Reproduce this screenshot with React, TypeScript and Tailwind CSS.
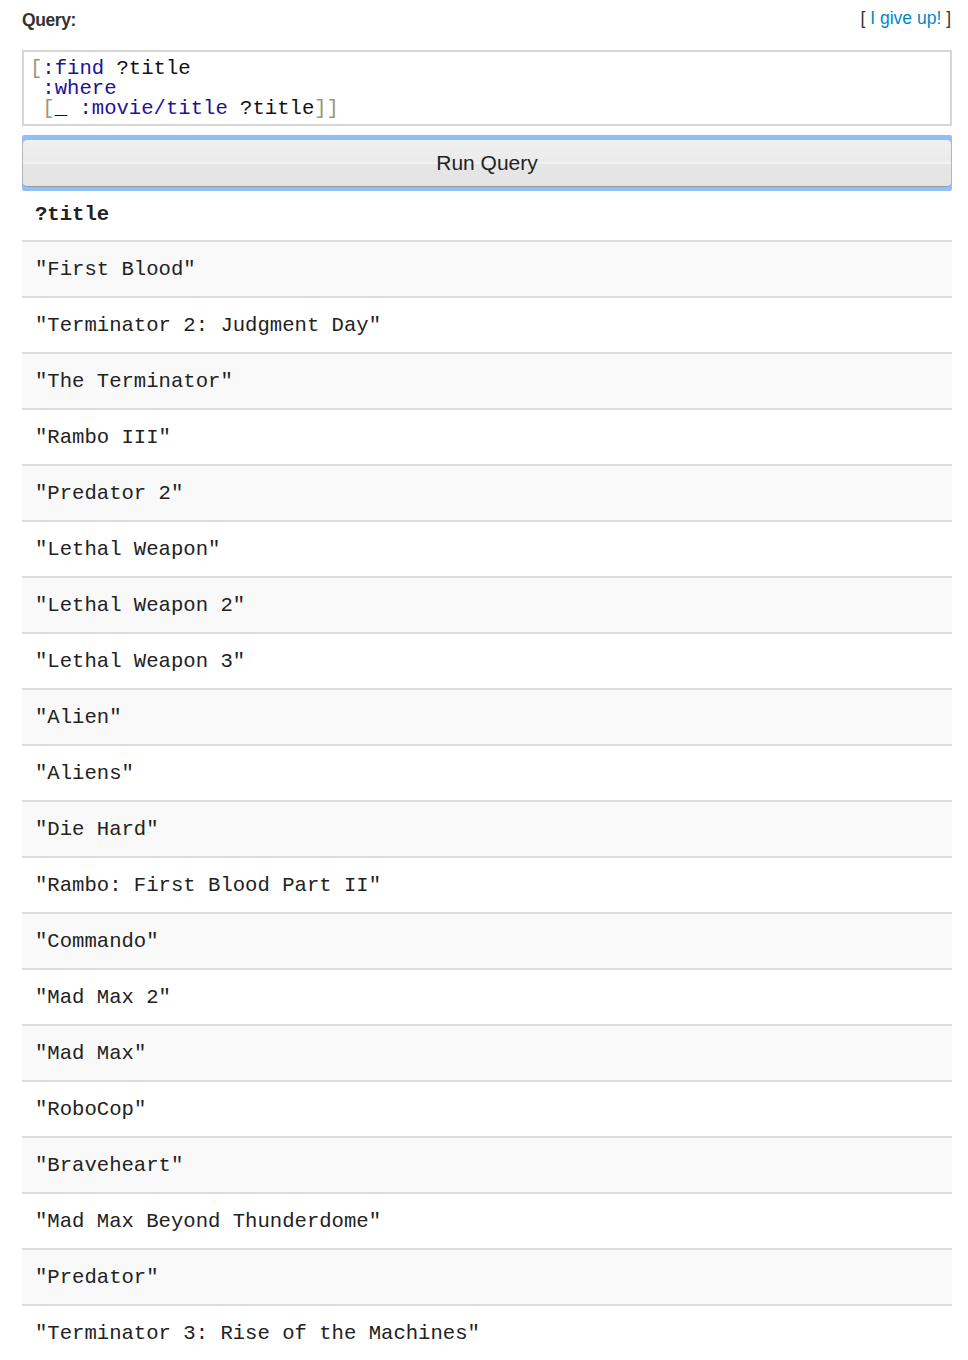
import React from "react";

const titles = [
  "First Blood",
  "Terminator 2: Judgment Day",
  "The Terminator",
  "Rambo III",
  "Predator 2",
  "Lethal Weapon",
  "Lethal Weapon 2",
  "Lethal Weapon 3",
  "Alien",
  "Aliens",
  "Die Hard",
  "Rambo: First Blood Part II",
  "Commando",
  "Mad Max 2",
  "Mad Max",
  "RoboCop",
  "Braveheart",
  "Mad Max Beyond Thunderdome",
  "Predator",
  "Terminator 3: Rise of the Machines",
];

const mono = { fontFamily: '"Liberation Mono", "Courier New", monospace' };

export default function App() {
  return (
    <div
      className="bg-white text-[#333] min-h-[1360px] pl-[22px] pr-[16px]"
      style={{ fontFamily: '"Liberation Sans", Arial, sans-serif' }}
    >
      <div className="flex items-center justify-between h-[40px]">
        <span className="font-bold text-[17.5px] tracking-[-0.4px]">Query:</span>
        <span className="text-[17.5px] pr-[1px] -mt-[3px]">
          [ <a className="text-[#0088cc]">I give up!</a> ]
        </span>
      </div>

      {/* editor */}
      <div className="mt-[10px] h-[76px] border-2 border-[#d6d6d6] pl-[6px] pt-[7px]">
        <pre className="text-[20.6px] leading-[20px] m-0 text-[#111]" style={mono}>
          <span className="text-[#997]">[</span>
          <span className="text-[#221199]">:find</span> ?title
          {"\n "}
          <span className="text-[#221199]">:where</span>
          {"\n "}
          <span className="text-[#997]">[</span>_ <span className="text-[#221199]">:movie/title</span> ?title
          <span className="text-[#997]">]]</span>
        </pre>
      </div>

      {/* button */}
      <div className="mt-[9px] bg-[#8fc0f7] py-[4px] rounded-[2px]">
        <button className="w-full h-[48px] rounded-[5px] border border-[#b5b5b5] border-b-[#9a9a9a] bg-[linear-gradient(#f0f0f0_0%,#ebebeb_48%,#fdfdfd_50%,#e6e6e6_52%,#e4e4e4_100%)] text-[21px] text-[#222] flex items-center justify-center">
          Run Query
        </button>
      </div>

      {/* results */}
      <table className="w-full border-collapse" style={mono}>
        <thead>
          <tr className="border-b-2 border-[#dddddd]">
            <th className="h-[50px] text-left pl-[13px] text-[20.6px] font-bold text-[#222]">?title</th>
          </tr>
        </thead>
        <tbody>
          {titles.map((t, i) => (
            <tr
              key={t}
              className={`border-b-2 border-[#dddddd] last:border-b-0 ${i % 2 === 0 ? "bg-[#f9f9f9]" : "bg-white"}`}
            >
              <td className="h-[56px] pl-[13px] pt-[2px] text-[20.6px] text-[#222]">"{t}"</td>
            </tr>
          ))}
        </tbody>
      </table>
    </div>
  );
}
